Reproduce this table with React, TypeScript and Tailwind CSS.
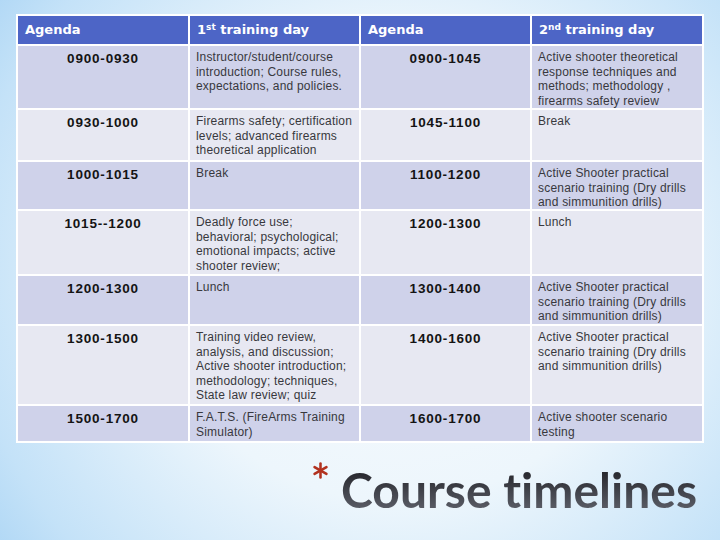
const times1 = ["0900-0930", "0930-1000", "1000-1015", "1015--1200", "1200-1300", "1300-1500", "1500-1700"];
const times2 = ["0900-1045", "1045-1100", "1100-1200", "1200-1300", "1300-1400", "1400-1600", "1600-1700"];

const practical = ["Active Shooter practical", "scenario training (Dry drills", "and simmunition drills)"];

const day1: string[][] = [
  ["Instructor/student/course", "introduction; Course rules,", "expectations, and policies."],
  ["Firearms safety; certification", "levels; advanced firearms", "theoretical application"],
  ["Break"],
  ["Deadly force use;", "behavioral; psychological;", "emotional impacts; active", "shooter review;"],
  ["Lunch"],
  [
    "Training video review,",
    "analysis, and discussion;",
    "Active shooter introduction;",
    "methodology; techniques,",
    "State law review; quiz",
  ],
  ["F.A.T.S. (FireArms Training", "Simulator)"],
];

const day2: string[][] = [
  ["Active shooter theoretical", "response techniques and", "methods; methodology ,", "firearms safety review"],
  ["Break"],
  practical,
  ["Lunch"],
  practical,
  practical,
  ["Active shooter scenario", "testing"],
];

function HeaderCell({ children }: { children: React.ReactNode }) {
  return (
    <div className="flex items-center bg-[#4d65c6] pl-[7px] font-['DejaVu_Sans',sans-serif] text-[13px] font-bold text-white">
      {children}
    </div>
  );
}

function TimeCell({ time, dark }: { time: string; dark: boolean }) {
  return (
    <div
      className={`${dark ? "bg-[#cfd2ea]" : "bg-[#e7e8f2]"} pt-[5px] text-center font-['Liberation_Sans',sans-serif] text-[13.5px] leading-4 font-bold tracking-[0.8px] text-[#141414]`}
    >
      {time}
    </div>
  );
}

function TextCell({ lines, dark }: { lines: string[]; dark: boolean }) {
  return (
    <div
      className={`${dark ? "bg-[#cfd2ea]" : "bg-[#e7e8f2]"} pt-[4px] pl-[6px] font-['Liberation_Sans',sans-serif] text-[12px] leading-[14.5px] tracking-[0.2px] whitespace-nowrap text-[#38383d]`}
    >
      {lines.map((l, i) => (
        <div key={i}>{l}</div>
      ))}
    </div>
  );
}

function Asterisk() {
  return (
    <svg width="17" height="17" viewBox="0 0 16 16" className="mt-[-4px] mr-[12px]">
      <g stroke="#b2321f" strokeWidth="2.4" strokeLinecap="round">
        <line x1="8" y1="1.5" x2="8" y2="14.5" />
        <line x1="2.4" y1="4.8" x2="13.6" y2="11.2" />
        <line x1="2.4" y1="11.2" x2="13.6" y2="4.8" />
      </g>
    </svg>
  );
}

export default function App() {
  return (
    <div className="h-[540px] w-[720px] overflow-hidden bg-[radial-gradient(ellipse_75%_95%_at_55%_50%,#f8fbfe_0%,#edf6fc_45%,#c4e2f8_80%,#a2d0f3_100%)] pt-[14px] pl-[16px]">
      <div className="grid w-fit grid-cols-[170px_169px_169px_170px] grid-rows-[28px_62px_50px_47px_63px_48px_78px_35px] gap-[2px] bg-white p-[2px]">
        <HeaderCell>Agenda</HeaderCell>
        <HeaderCell>
          <span>
            1<sup className="text-[9px]">st</sup> training day
          </span>
        </HeaderCell>
        <HeaderCell>Agenda</HeaderCell>
        <HeaderCell>
          <span>
            2<sup className="text-[9px]">nd</sup> training day
          </span>
        </HeaderCell>

        {times1.map((t, i) => {
          const dark = i % 2 === 0;
          return [
            <TimeCell key={`a${i}`} time={t} dark={dark} />,
            <TextCell key={`b${i}`} lines={day1[i]} dark={dark} />,
            <TimeCell key={`c${i}`} time={times2[i]} dark={dark} />,
            <TextCell key={`d${i}`} lines={day2[i]} dark={dark} />,
          ];
        })}
      </div>

      <div className="mt-[23px] flex justify-end pr-[23px]">
        <Asterisk />
        <span className="bg-[linear-gradient(180deg,#1f1f24_0%,#43454d_55%,#60636d_100%)] bg-clip-text font-['Lato',sans-serif] text-[48px] leading-none font-bold text-transparent [font-variant-ligatures:none]">
          Course timelines
        </span>
      </div>
    </div>
  );
}
